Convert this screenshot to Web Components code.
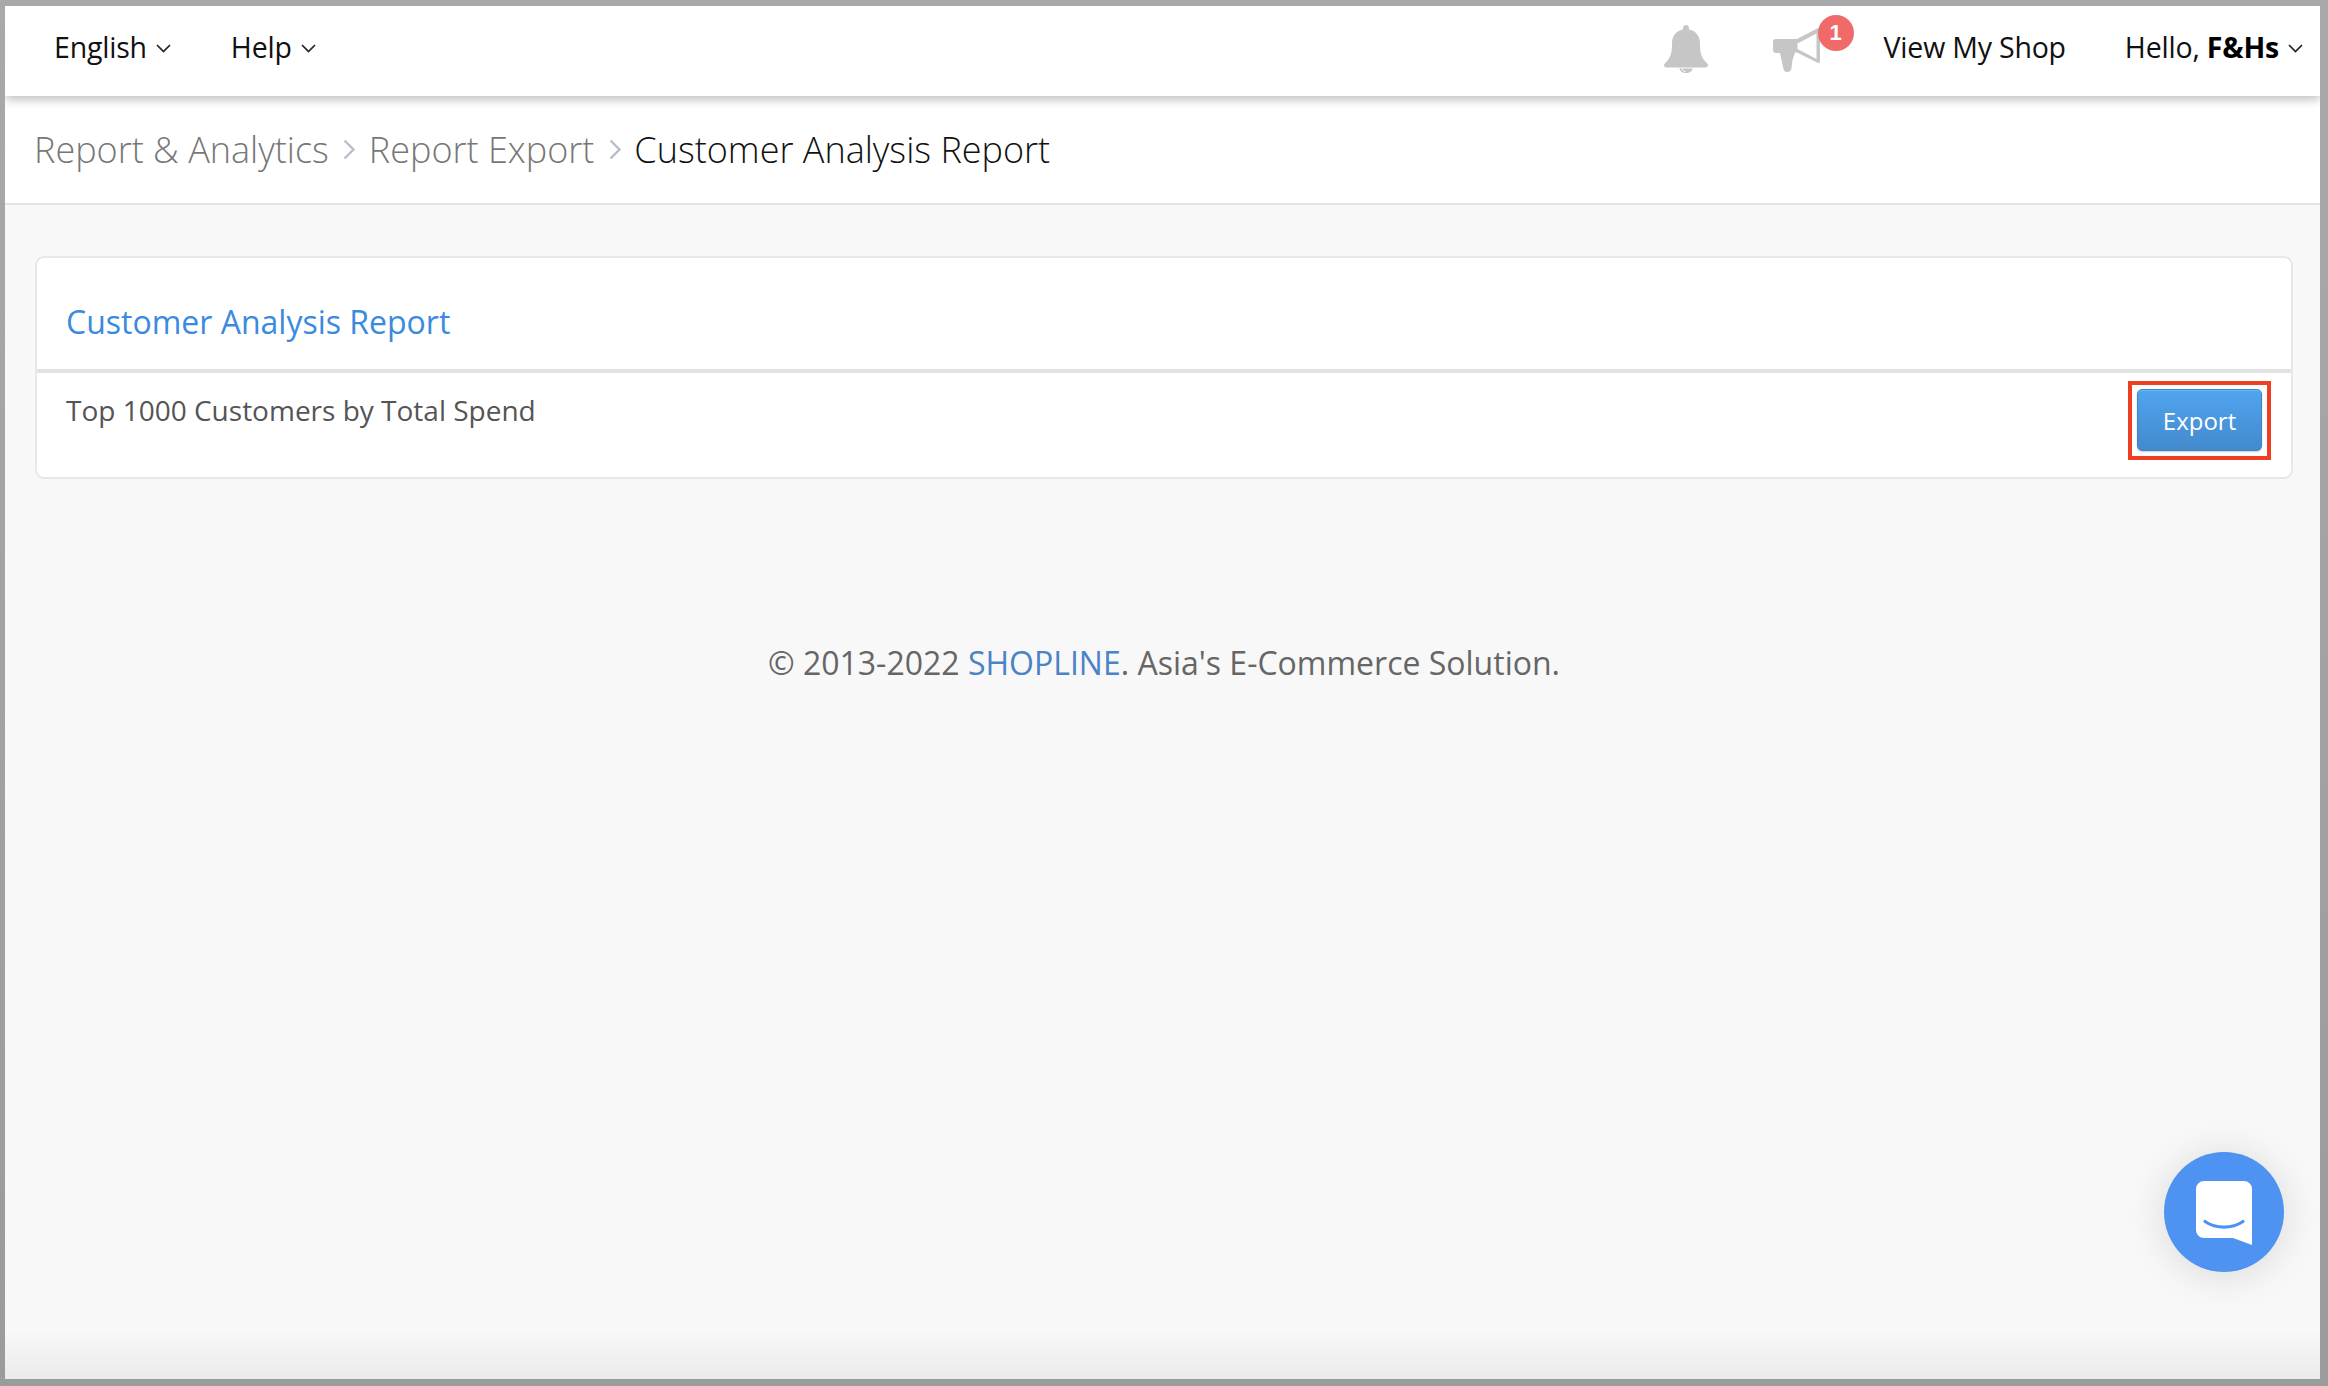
<!DOCTYPE html>
<html><head><meta charset="utf-8"><style>
html,body{margin:0;height:100%}
body{font-family:"Open Sans",sans-serif}
</style></head><body>
<app-frame>
  <top-nav>
    <nav-menu slot="left">English</nav-menu>
    <nav-menu slot="left">Help</nav-menu>
    <notify-bell slot="right"></notify-bell>
    <notify-horn slot="right"></notify-horn>
    <nav-link slot="right">View My Shop</nav-link>
    <nav-menu slot="right">Hello,&nbsp;<b>F&amp;Hs</b></nav-menu>
  </top-nav>
  <bread-crumbs><a>Report &amp; Analytics</a><a>Report Export</a><b>Customer Analysis Report</b></bread-crumbs>
  <page-main>
    <report-card heading="Customer Analysis Report">
      <report-row label="Top 1000 Customers by Total Spend"><export-button>Export</export-button></report-row>
    </report-card>
    <page-footer>© 2013-2022 <a>SHOPLINE</a>. Asia's E-Commerce Solution.</page-footer>
  </page-main>
  <chat-launcher></chat-launcher>
</app-frame>
<script>
function def(name, html, init){
  customElements.define(name, class extends HTMLElement{
    constructor(){super();this.attachShadow({mode:'open'}).innerHTML=html;}
    connectedCallback(){ if(init) init(this); }
  });
}
const chev='<svg width="15" height="9" viewBox="0 0 15 9" fill="none" stroke="#222" stroke-width="1.7"><path d="M1 1l6.500 6.500L14 1"/></svg>';
def('app-frame',`<style>
:host{display:block;box-sizing:border-box;height:1386px;padding:6px 8px 7px 5px;background:linear-gradient(#a9a9a9,#9b9b9b)}
.w{position:relative;display:flex;flex-direction:column;height:100%;background:#f8f8f8;overflow:hidden}
.w::after{content:"";position:absolute;left:0;right:0;bottom:0;height:50px;background:linear-gradient(rgba(0,0,0,0),rgba(0,0,0,.055));pointer-events:none}
</style><div class="w"><slot></slot></div>`);
def('top-nav',`<style>
:host{display:flex;flex:none;height:90px;align-items:center;justify-content:space-between;background:#fff;padding:0 17px 0 49px;box-shadow:0 3px 10px rgba(0,0,0,.28);position:relative;z-index:2;font-size:28.500px;letter-spacing:-.2px;color:#111}
div{display:flex;align-items:center}
.l{gap:60px}
</style><div class="l"><slot name="left"></slot></div><div class="r"><slot name="right"></slot></div>`);
def('nav-menu',`<style>:host{display:inline-flex;align-items:center;white-space:nowrap;padding-bottom:8px}
svg{margin-left:9px;margin-top:2px}
::slotted(b){font-weight:700;color:#000}
</style><slot></slot>${chev}`);
def('nav-link',`<style>:host{display:inline-block;margin-right:59px;white-space:nowrap;padding-bottom:8px}</style><slot></slot>`);
def('notify-bell',`<style>:host{display:block;width:44px;height:48px;margin-right:65px;margin-top:-4px}svg{display:block}</style>
<svg width="44" height="48" viewBox="0 0 44 48" fill="#c6c6c6"><path d="M22 0c1.700 0 3 1.300 3 3v1.500C32.500 6 36 11.500 36 18.500c0 10 1.500 14.500 7 19.800.7.700 1 1.300 1 2 0 1.300-1 2.200-2.300 2.200H2.300C1 42.500 0 41.600 0 40.300c0-.7.300-1.300 1-2C6.500 33 8 28.500 8 18.500 8 11.500 11.500 6 19 4.500V3c0-1.700 1.300-3 3-3z"/><path d="M15.500 43.500h13c0 2.700-2.900 4.500-6.500 4.500s-6.500-1.800-6.500-4.500z"/><path d="M18 43.600c.3 2 1.900 2.900 3.700 3" fill="none" stroke="#fff" stroke-width="1"/></svg>`);
def('notify-horn',`<style>:host{display:block;position:relative;width:48px;height:44px;margin-right:63px;margin-top:-2px}svg{display:block}
i{position:absolute;left:45px;top:-13px;width:36px;height:36px;border-radius:50%;background:#f06a6a;color:#fff;font:700 22px/36px "Liberation Sans",sans-serif;text-align:center;letter-spacing:0}</style>
<svg width="48" height="44" viewBox="0 0 48 44" fill="#c6c6c6"><path d="M3 11H24L44 .6Q47-.4 47 2.500V33Q47 36 44 34.500L24 24.500H22L19.500 32 18.500 40Q18 44 14 44 11 44 10.500 41L7 25H3Q0 25 0 22V14Q0 11 3 11Z"/><path d="M24.500 15.500L43.500 5.500V31L24.500 21Z" fill="#fff"/></svg><i>1</i>`);
def('bread-crumbs',`<style>
:host{display:flex;flex:none;align-items:center;box-sizing:border-box;height:109px;padding:0 29px 0;background:#fff;border-bottom:2px solid #e4e4e4;font-size:36px;font-weight:300;color:#777;white-space:nowrap}
::slotted(b){font-weight:300;color:#111;margin-left:13.500px}
::slotted(a:not(:first-child)){margin-left:13.500px}
</style><slot></slot>`,el=>{
  if(el.dataset.done)return;el.dataset.done=1;
  [...el.children].slice(0,-1).forEach(a=>{
    const s=document.createElementNS('http://www.w3.org/2000/svg','svg');
    s.setAttribute('width','12');s.setAttribute('height','21');s.setAttribute('viewBox','0 0 12 21');
    s.style.cssText='margin-left:14.500px;fill:none;stroke:#b8bfcc;stroke-width:2.400';
    s.innerHTML='<path d="M1.500 1.500L10.500 10.500 1.500 19.500"/>';a.after(s);
  });
});
def('page-main',`<style>:host{display:block;flex:1;padding:51px 27px 0 30px}</style><slot></slot>`);
def('report-card',`<style>
:host{display:block;background:#fff;border:2px solid #e8e8e8;border-radius:9px;box-sizing:border-box;height:223px}
h2{margin:0;box-sizing:border-box;height:115px;padding:41.500px 29px 0;font-size:32px;line-height:44px;font-weight:400;color:#3a8ae0;border-bottom:4px solid #e2e2e2}
</style><h2></h2><slot></slot>`,el=>{el.shadowRoot.querySelector('h2').textContent=el.getAttribute('heading')});
def('report-row',`<style>
:host{display:flex;justify-content:space-between;box-sizing:border-box;padding:8px 20px 0 29px;color:#555;font-size:28px}
span{line-height:40px;padding-top:8.500px}
</style><span></span><slot></slot>`,el=>{el.shadowRoot.querySelector('span').textContent=el.getAttribute('label')});
def('export-button',`<style>
:host{display:block;box-sizing:border-box;border:4px solid #ee3f22;padding:4px 5px 5px;background:#fff}
button{display:block;box-sizing:border-box;width:125px;height:62px;border:1px solid #3f84c4;border-radius:5px;padding:0;color:#fff;font:400 24px "Open Sans",sans-serif;background:linear-gradient(#50a5ef,#4389cd);box-shadow:0 1px 2px rgba(0,0,0,.2),inset 0 1px 0 rgba(255,255,255,.18)}
</style><button><slot></slot></button>`);
def('page-footer',`<style>:host{display:block;text-align:center;margin-top:161.500px;font-size:32px;line-height:44px;color:#666}
::slotted(a){color:#4a83c6}</style><slot></slot>`);
def('chat-launcher',`<style>:host{position:absolute;right:36px;bottom:107px;width:120px;height:120px;border-radius:50%;background:#4f93f2;box-shadow:0 3px 40px rgba(0,0,0,.13);display:flex;align-items:center;justify-content:center}
svg{display:block;margin-top:2px}</style>
<svg width="56" height="64" viewBox="0 0 56 64"><path d="M8 0h40a8 8 0 0 1 8 8v56l-19-7H8a8 8 0 0 1-8-8V8a8 8 0 0 1 8-8z" fill="#fff"/><path d="M9 40.500c11 7.500 27 7.500 38 0" fill="none" stroke="#4f93f2" stroke-width="3.200" stroke-linecap="round"/></svg>`);
</script>
</body></html>
